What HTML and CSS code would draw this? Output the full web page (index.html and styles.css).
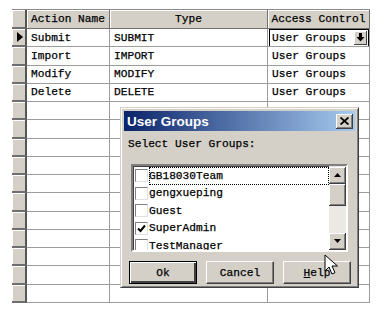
FILE: index.html
```html
<!DOCTYPE html>
<html lang="en">
<head>
    <meta charset="UTF-8">
    <title>Access Control</title>
    <link rel="stylesheet" href="styles.css">
</head>
<body>
    <div class="grid">
        <div class="ind head"></div>
        <div class="cell head">Action Name</div>
        <div class="cell head">Type</div>
        <div class="cell head">Access Control</div>

        <div class="ind"><span class="arrow"></span></div>
        <div class="cell">Submit</div>
        <div class="cell">SUBMIT</div>
        <div class="cell">
            <div class="combo">
                <span>User Groups</span>
                <span class="combo-btn">
                    <svg width="9" height="9" viewBox="0 0 9 9"><path d="M3 0h3v4h2.5L4.5 8.5 0.5 4H3z" fill="#000"/></svg>
                </span>
            </div>
        </div>

        <div class="ind"></div>
        <div class="cell">Import</div>
        <div class="cell">IMPORT</div>
        <div class="cell">User Groups</div>

        <div class="ind"></div>
        <div class="cell">Modify</div>
        <div class="cell">MODIFY</div>
        <div class="cell">User Groups</div>

        <div class="ind"></div>
        <div class="cell">Delete</div>
        <div class="cell">DELETE</div>
        <div class="cell">User Groups</div>

        <div class="ind"></div><div class="cell"></div><div class="cell"></div><div class="cell"></div>
        <div class="ind"></div><div class="cell"></div><div class="cell"></div><div class="cell"></div>
        <div class="ind"></div><div class="cell"></div><div class="cell"></div><div class="cell"></div>
        <div class="ind"></div><div class="cell"></div><div class="cell"></div><div class="cell"></div>
        <div class="ind"></div><div class="cell"></div><div class="cell"></div><div class="cell"></div>
        <div class="ind"></div><div class="cell"></div><div class="cell"></div><div class="cell"></div>
        <div class="ind"></div><div class="cell"></div><div class="cell"></div><div class="cell"></div>
        <div class="ind"></div><div class="cell"></div><div class="cell"></div><div class="cell"></div>
        <div class="ind"></div><div class="cell"></div><div class="cell"></div><div class="cell"></div>
        <div class="ind"></div><div class="cell"></div><div class="cell"></div><div class="cell"></div>
        <div class="ind"></div><div class="cell"></div><div class="cell"></div><div class="cell"></div>
    </div>

    <div class="dialog">
        <div class="titlebar">
            <span>User Groups</span>
            <span class="close-btn">
                <svg width="9" height="8" viewBox="0 0 9 8"><path d="M0.5 0.5L8.5 7.5M8.5 0.5L0.5 7.5" stroke="#000" stroke-width="1.8"/></svg>
            </span>
        </div>
        <div class="label">Select User Groups:</div>
        <div class="listbox">
            <div class="items">
                <div class="item focus"><span class="check"></span>GB18030Team</div>
                <div class="item"><span class="check"></span>gengxueping</div>
                <div class="item"><span class="check"></span>Guest</div>
                <div class="item"><span class="check">
                    <svg width="9" height="9" viewBox="0 0 9 9"><path d="M1 4.5L3.5 7L8 1.5" stroke="#000" stroke-width="2" fill="none"/></svg>
                </span>SuperAdmin</div>
                <div class="item"><span class="check"></span>TestManager</div>
            </div>
            <div class="scrollbar">
                <span class="sb-btn">
                    <svg width="7" height="4" viewBox="0 0 7 4"><path d="M3.5 0L7 4H0z" fill="#000"/></svg>
                </span>
                <span class="sb-thumb"></span>
                <span class="sb-track"></span>
                <span class="sb-btn">
                    <svg width="7" height="4" viewBox="0 0 7 4"><path d="M0 0h7L3.5 4z" fill="#000"/></svg>
                </span>
            </div>
        </div>
        <div class="buttons">
            <button class="btn default">Ok</button>
            <button class="btn">Cancel</button>
            <button class="btn"><u>H</u>elp</button>
        </div>
    </div>

    <svg class="cursor" width="14" height="22" viewBox="0 0 14 22">
        <path d="M1 1v16l4-4 3 7 3-1.3-3-6.7h5.5z" fill="#fff" stroke="#000" stroke-width="1"/>
    </svg>
</body>
</html>
```

FILE: styles.css
```css
body {
    margin: 0;
    background: #fff;
    font-family: "Liberation Mono", monospace;
    font-size: 11.2px;
    color: #000;
    -webkit-text-stroke: 0.25px #000;
}

.grid {
    display: grid;
    grid-template-columns: 15px 83px 158px 102px;
    grid-template-rows: 19px repeat(15, 1fr);
    width: 358px;
    height: 294px;
    margin: 9px 0 0 12px;
    border-top: 1px solid #8a8a8a;
    box-sizing: border-box;
}

.cell {
    display: flex;
    align-items: center;
    padding-left: 4px;
    border-right: 1px solid #9c9c9c;
    border-bottom: 1px solid #9c9c9c;
    white-space: nowrap;
    overflow: hidden;
}

.cell.head {
    justify-content: center;
    padding: 0;
    background: #d4d0c8;
    border-right-color: #707070;
    border-bottom-color: #707070;
    box-shadow: inset 1px 1px #fff;
}

.ind {
    display: flex;
    align-items: center;
    justify-content: center;
    background: #d4d0c8;
    border-right: 2px solid #555;
    border-bottom: 2px solid #6e6e6e;
    box-shadow: inset 1px 1px #fff;
}

.arrow {
    width: 0;
    height: 0;
    border-top: 5px solid transparent;
    border-bottom: 5px solid transparent;
    border-left: 6px solid #000;
    margin-left: 2px;
}

.combo {
    display: flex;
    align-items: center;
    justify-content: space-between;
    width: 100%;
    height: 16px;
    margin-left: -3px;
    padding-left: 2px;
    border: 1px solid #000;
    background: #fff;
}

.combo-btn {
    display: flex;
    align-items: center;
    justify-content: center;
    width: 12px;
    height: 13px;
    margin-right: 1px;
    background: #d4d0c8;
    border-right: 1px solid #404040;
    border-bottom: 1px solid #404040;
    box-shadow: inset 1px 1px #fff;
}

.dialog {
    position: absolute;
    left: 120px;
    top: 107px;
    width: 239px;
    height: 181px;
    box-sizing: border-box;
    padding: 3px;
    background: #d4d0c8;
    border: 1px solid;
    border-color: #d4d0c8 #404040 #404040 #d4d0c8;
    box-shadow: inset 1px 1px #fff, inset -1px -1px #808080;
}

.titlebar {
    display: flex;
    align-items: center;
    justify-content: space-between;
    height: 20px;
    padding: 0 2px 0 3px;
    background: linear-gradient(90deg, #0a246a, #a6caf0);
    color: #fff;
    font-family: "Liberation Sans", sans-serif;
    font-weight: bold;
    font-size: 13.5px;
    -webkit-text-stroke: 0;
}

.close-btn {
    display: flex;
    align-items: center;
    justify-content: center;
    width: 17px;
    height: 15px;
    box-sizing: border-box;
    background: #d4d0c8;
    border-right: 1px solid #404040;
    border-bottom: 1px solid #404040;
    box-shadow: inset 1px 1px #fff, inset -1px -1px #808080;
}

.label {
    margin: 7px 0 0 4px;
    height: 15px;
}

.listbox {
    display: flex;
    width: 217px;
    height: 88px;
    margin: 11px 0 0 7px;
    box-sizing: border-box;
    background: #fff;
    border: 2px solid;
    border-color: #808080 #fff #fff #808080;
    box-shadow: inset 1px 1px #404040;
    overflow: hidden;
}

.items {
    flex: 1;
    padding: 1px 0 0 2px;
}

.item {
    display: flex;
    align-items: center;
    height: 17.5px;
    white-space: nowrap;
}

.item.focus {
    outline: 1px dotted #000;
    outline-offset: -1px;
    margin-left: 14px;
}

.item.focus .check {
    margin-left: -14px;
}

.check {
    display: flex;
    align-items: center;
    justify-content: center;
    width: 13px;
    height: 13px;
    margin-right: 1px;
    box-sizing: border-box;
    background: #fff;
    border: 1px solid;
    border-color: #808080 #e0e0e0 #e0e0e0 #808080;
}

.scrollbar {
    display: flex;
    flex-direction: column;
    width: 17px;
    padding-top: 1px;
    background: #ece9e4;
}

.sb-btn, .sb-thumb {
    display: flex;
    align-items: center;
    justify-content: center;
    height: 17px;
    box-sizing: border-box;
    background: #d4d0c8;
    border-right: 1px solid #404040;
    border-bottom: 1px solid #404040;
    box-shadow: inset 1px 1px #fff, inset -1px -1px #808080;
}

.sb-thumb {
    height: 22px;
}

.sb-track {
    flex: 1;
}

.buttons {
    display: flex;
    gap: 9px;
    margin: 9px 0 0 5px;
}

.btn {
    width: 68px;
    height: 23px;
    padding: 0;
    background: #d4d0c8;
    font-family: "Liberation Mono", monospace;
    font-size: 11.2px;
    color: #000;
    -webkit-text-stroke: 0.25px #000;
    border: 1px solid;
    border-color: #fff #404040 #404040 #fff;
    box-shadow: inset -1px -1px #808080;
}

.btn.default {
    border: 1px solid #000;
    box-shadow: inset 1px 1px #fff, inset -2px -2px #404040;
}

.cursor {
    position: absolute;
    left: 324px;
    top: 254px;
}
```
